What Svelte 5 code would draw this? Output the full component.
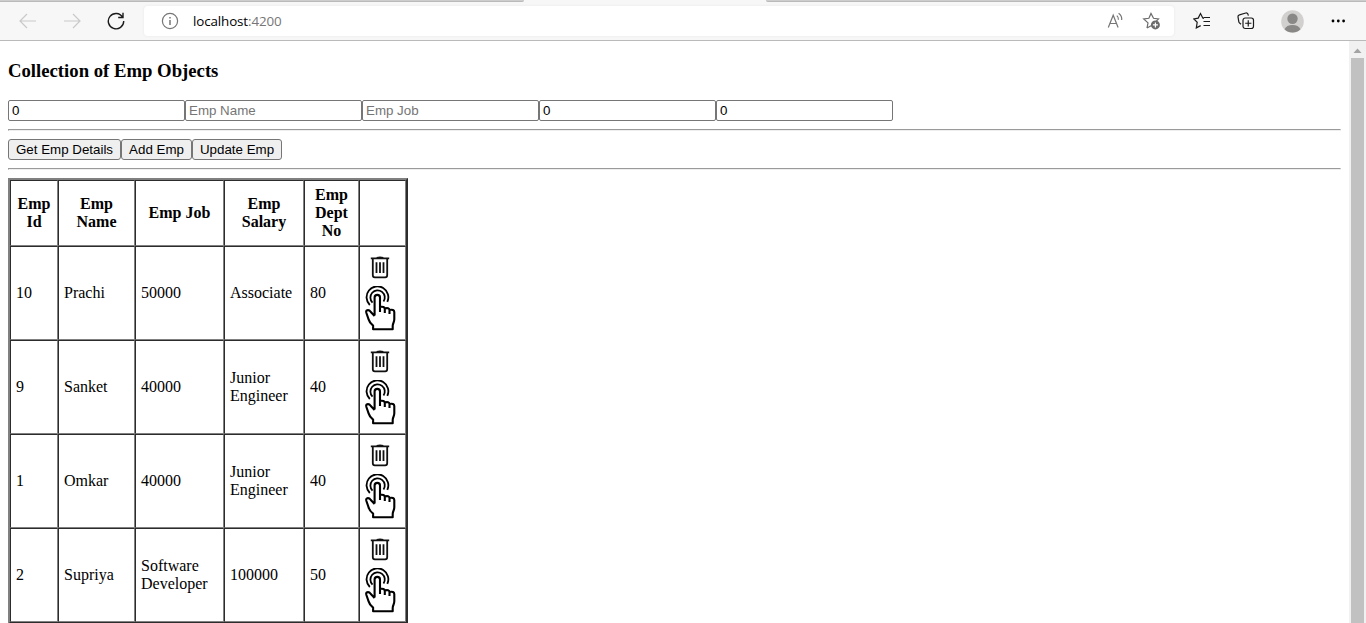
<script>
  const employees = [
    { id: 10, name: 'Prachi', job: '50000', salary: 'Associate', dept: 80 },
    { id: 9, name: 'Sanket', job: '40000', salary: 'Junior Engineer', dept: 40 },
    { id: 1, name: 'Omkar', job: '40000', salary: 'Junior Engineer', dept: 40 },
    { id: 2, name: 'Supriya', job: 'Software Developer', salary: '100000', dept: 50 }
  ];
  const headings = ['Emp Id', 'Emp Name', 'Emp Job', 'Emp Salary', 'Emp Dept No', ''];
  const widths = [48, 77, 89, 80, 55, 47];
</script>

<div class="window">
  <div class="tabs"><i class="left"></i><i class="right"></i></div>
  <header>
    <svg class="back" width="18" height="16" viewBox="0 0 18 16"><path d="M17 8H1M8 1L1 8l7 7" /></svg>
    <svg class="forward" width="18" height="16" viewBox="0 0 18 16"><path d="M1 8h16M10 1l7 7-7 7" /></svg>
    <svg class="reload" width="18" height="18" viewBox="0 0 18 18"><path d="M15.6 5.2A7.7 7.7 0 1 0 16.7 9M16 .8v4.7h-4.8" /></svg>
    <div class="address">
      <svg class="info" width="18" height="18" viewBox="0 0 18 18"><circle cx="9" cy="9" r="7.6" /><path d="M9 8v5M9 5v1.5" stroke-width="1.5" /></svg>
      <span class="url">localhost<span>:4200</span></span>
      <svg class="read" width="18" height="18" viewBox="0 0 18 18"><path d="M1.3 15.5L6.2 3.2l4.9 12.3M3 11.5h6.4M9.8 3.6q1.9 1.6 1.6 4.2M11.6 1.2q3.6 2.5 3.1 6.8" /></svg>
      <svg class="fav" width="19" height="18" viewBox="0 0 19 18"><path d="M5 16l1-5.1-4.3-4 5.2-.6L9 1.5l2.5 4.8 5 .6-2.2 2.2M5 16l4-2.2" /><circle cx="13.4" cy="12.9" r="4.5" fill="#6b6b6b" stroke="none" /><path d="M13.4 10.4v5M10.9 12.9h5" stroke="#fff" /></svg>
    </div>
    <svg class="favorites" width="18" height="18" viewBox="0 0 18 18"><path d="M11 6.4L9.8 6 7.5 1.5 5.2 6.1l-4.4.8 3.4 3.4-.9 5.6 4.4-2.3M10.5 5.5H17M10.5 9.5H17M10.5 13.5H17" /></svg>
    <svg class="collections" width="18" height="18" viewBox="0 0 18 18"><path d="M4 12.2L2.6 11q-.7-.5-.8-1.3L1 4.8q-.2-1.6 1.4-2L8.8 1q1.5-.3 2.1 1.1l.5 1.5" /><rect x="6" y="6" width="10.5" height="10.5" rx="2.2" /><path d="M11.25 8.2v6.2M8.2 11.25h6.2" /></svg>
    <svg class="avatar" width="23" height="23" viewBox="0 0 23 23"><circle cx="11.5" cy="11.5" r="11.3" fill="#d2d0ce" /><circle cx="11.5" cy="8.7" r="5.2" fill="#8a8886" /><path d="M3.5 19.3q2-4.3 8-4.3t8 4.3a11.3 11.3 0 0 1-16 0z" fill="#8a8886" /></svg>
    <svg class="more" width="15" height="4" viewBox="0 0 15 4"><circle cx="2" cy="2" r="1.4" /><circle cx="7.3" cy="2" r="1.4" /><circle cx="12.6" cy="2" r="1.4" /></svg>
  </header>
  <div class="viewport">
    <main>
      <h3>Collection of Emp Objects</h3>
      <div class="fields">
        <input value="0" /><input placeholder="Emp Name" /><input placeholder="Emp Job" /><input value="0" /><input value="0" />
      </div>
      <hr />
      <div class="buttons">
        <button style="width: 113px">Get Emp Details</button><button style="width: 71px">Add Emp</button><button style="width: 90px">Update Emp</button>
      </div>
      <hr />
      <table>
        <colgroup>{#each widths as w}<col style="width: {w}px" />{/each}</colgroup>
        <thead><tr>{#each headings as h}<th>{h}</th>{/each}</tr></thead>
        <tbody>
          {#each employees as e}
            <tr>
              <td>{e.id}</td><td>{e.name}</td><td>{e.job}</td><td>{e.salary}</td><td>{e.dept}</td>
              <td class="actions">
                <div>
                  <svg class="trash" width="20" height="24" viewBox="0 0 20 24"><path d="M.8 3.3h18.4M6.8 2.8q3.2-1 6.4 0M2.8 4v16.3q0 2 2 2h10.4q2 0 2-2V4" /><path d="M6.5 7.3v10.7M10 7.3v10.7M13.5 7.3v10.7" stroke-width="1.8" /></svg>
                  <svg class="hand" width="32" height="46" viewBox="0 0 32 46">
                    <path d="M5.8 19A10.9 10.9 0 1 1 23.3 15.9" stroke-width="1.8" />
                    <path d="M8.5 16.6A7.2 7.2 0 1 1 19.5 15.6" stroke-width="1.8" />
                    <path d="M10.6 29.6V11.6q0-2.7 2.7-2.7t2.7 2.7v14.4M16 20.9q4.6-.8 4.8 2v4.2M20.8 22.4q4.3-1 4.7 1.5v4M25.5 24q4.6-.9 4.8 2v7.3q0 1.6-.8 3.4t-.8 3.3v3.2H9.1v-3.6Q5.6 37 4.6 33.4L2.4 27q-.7-2.3.8-2.8 2-.6 3.6 1.8l3.8 4" stroke-width="2.1" />
                  </svg>
                </div>
              </td>
            </tr>
          {/each}
        </tbody>
      </table>
    </main>
    <div class="scrollbar"><svg width="9" height="5" viewBox="0 0 9 5"><path d="M.5 5L4.5.5l4 4.5z" fill="#a3a3a3" /></svg><div class="thumb"></div></div>
  </div>
</div>

<style>
  :global(body) { margin: 0; overflow: hidden; background: #fff; }
  .window { width: 1366px; height: 623px; overflow: hidden; display: flex; flex-direction: column; font-family: "Liberation Serif", serif; font-size: 16px; color: #000; }
  .tabs { height: 2px; flex: none; display: flex; justify-content: space-between; background: #f7f7f7; }
  .tabs i { height: 2px; box-sizing: border-box; background: #cdcdcd; border-bottom: 1px solid #bababa; }
  .left { width: 524px; border-bottom-right-radius: 2px; }
  .right { width: 600px; border-bottom-left-radius: 2px; }
  header { height: 39px; flex: none; box-sizing: border-box; border-bottom: 1px solid #bababa; background: #f7f7f7; display: flex; align-items: center; }
  header svg { flex: none; fill: none; stroke: #1b1b1b; stroke-width: 1.2; }
  header .back { margin-left: 19px; stroke: #c9c9c9; }
  header .forward { margin-left: 26px; stroke: #c9c9c9; }
  header .reload { margin-left: 26px; stroke-width: 1.4; }
  .address { margin-left: 19px; width: 1030px; height: 30px; background: #fff; border-radius: 4px; display: flex; align-items: center; box-shadow: 0 0 3px #e8e8e8; }
  .address .info { margin-left: 17px; stroke: #767676; }
  .url { width: 914px; margin-left: 14px; font: 13.4px/18px "Open Sans", sans-serif; letter-spacing: -.12px; }
  .url span { color: #767676; }
  .address .read { stroke: #767676; }
  .address .fav { margin-left: 17px; stroke: #6b6b6b; }
  .favorites { margin-left: 19px; }
  .collections { margin-left: 26px; }
  header .avatar { margin-left: 26px; stroke: none; }
  header .more { margin-left: 27px; fill: #000; stroke: none; }
  .viewport { flex: 1; min-height: 0; display: flex; }
  main { width: 1333px; padding: 0 8px; overflow: hidden; }
  h3 { font-size: 18.72px; line-height: 21px; margin: 19px 0; }
  .fields, .buttons { display: flex; height: 21px; }
  input { box-sizing: border-box; width: 177px; height: 21px; margin: 0; padding: 1px 3px; border: 1px solid #767676; border-radius: 2px; font: 13.333px "Liberation Sans", sans-serif; color: #000; background: #fff; }
  input::placeholder { color: #757575; }
  button { box-sizing: border-box; height: 21px; margin: 0; padding: 0; border: 1px solid #767676; border-radius: 3px; background: #efefef; color: #000; font: 13.333px "Liberation Sans", sans-serif; white-space: nowrap; }
  hr { margin: 8px 0; border: 1px solid; border-color: #9a9a9a #eee #eee #9a9a9a; height: 0; }
  table { table-layout: fixed; width: 400px; border: 2px solid; border-color: #808080 #2c2c2c #2c2c2c #808080; border-spacing: 0; line-height: 18px; }
  th, td { box-sizing: border-box; padding: 5px; border: 1px solid; border-color: #2c2c2c #808080 #808080 #2c2c2c; vertical-align: middle; }
  th { height: 66px; }
  td { height: 94px; text-align: left; }
  .actions div { display: flex; flex-direction: column; height: 80px; }
  .trash { margin: 2px 0 0 5px; flex: none; fill: none; stroke: #111; stroke-width: 1.8; }
  .hand { margin: 7px 0 0 -1px; flex: none; fill: none; stroke: #000; stroke-linejoin: round; }
  .scrollbar { width: 17px; box-sizing: border-box; background: #f1f1f1; display: flex; flex-direction: column; align-items: center; padding-top: 7px; }
  .scrollbar svg { flex: none; }
  .thumb { margin-top: 5px; width: 13px; flex: 1; background: #c1c1c1; }
</style>
